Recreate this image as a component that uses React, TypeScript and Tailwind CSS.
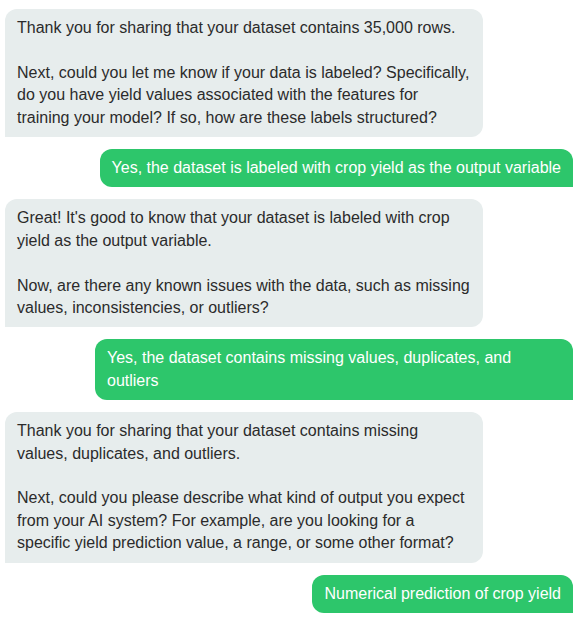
import React from "react";

type Message = {
  from: "bot" | "user";
  lines: string[];
};

const messages: Message[] = [
  {
    from: "bot",
    lines: [
      "Thank you for sharing that your dataset contains 35,000 rows.",
      "Next, could you let me know if your data is labeled? Specifically, do you have yield values associated with the features for training your model? If so, how are these labels structured?",
    ],
  },
  {
    from: "user",
    lines: ["Yes, the dataset is labeled with crop yield as the output variable"],
  },
  {
    from: "bot",
    lines: [
      "Great! It's good to know that your dataset is labeled with crop yield as the output variable.",
      "Now, are there any known issues with the data, such as missing values, inconsistencies, or outliers?",
    ],
  },
  {
    from: "user",
    lines: ["Yes, the dataset contains missing values, duplicates, and outliers"],
  },
  {
    from: "bot",
    lines: [
      "Thank you for sharing that your dataset contains missing values, duplicates, and outliers.",
      "Next, could you please describe what kind of output you expect from your AI system? For example, are you looking for a specific yield prediction value, a range, or some other format?",
    ],
  },
  {
    from: "user",
    lines: ["Numerical prediction of crop yield"],
  },
];

export default function App() {
  return (
    <div className="min-h-screen bg-white px-[5px] pt-[9px] pb-2 font-['Liberation_Sans',Arial,sans-serif] text-base leading-[22.4px]">
      <div className="flex flex-col gap-3">
        {messages.map((msg, index) => {
          if (msg.from === "user") {
            return (
              <div key={index} className="flex justify-end pr-[4px]">
                <div className="max-w-[478px] rounded-xl rounded-br-none bg-[#2dc66b] px-3 py-2 text-white">
                  {msg.lines.join(" ")}
                </div>
              </div>
            );
          }
          return (
            <div key={index} className="flex justify-start">
              <div className="max-w-[478px] rounded-xl rounded-bl-none bg-[#e7eded] px-3 py-2 text-[#2b2b2b]">
                {msg.lines.map((line, i) => (
                  <p key={i} className={i > 0 ? "mt-[22.4px]" : ""}>
                    {line}
                  </p>
                ))}
              </div>
            </div>
          );
        })}
      </div>
    </div>
  );
}
